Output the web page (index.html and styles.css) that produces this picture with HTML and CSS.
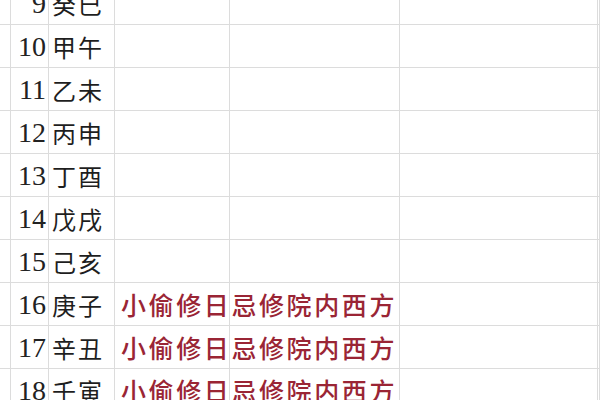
FILE: index.html
```html
<!DOCTYPE html>
<html lang="zh">
<head>
<meta charset="utf-8">
<link rel="stylesheet" href="styles.css">
</head>
<body>
<div class="sheet">
  <div class="row"><div class="c c0"></div><div class="c num">9</div><div class="c gz">癸巳</div><div class="c note"></div><div class="c e4"></div><div class="c e5"></div><div class="c e6"></div></div>
  <div class="row"><div class="c c0"></div><div class="c num">10</div><div class="c gz">甲午</div><div class="c note"></div><div class="c e4"></div><div class="c e5"></div><div class="c e6"></div></div>
  <div class="row"><div class="c c0"></div><div class="c num">11</div><div class="c gz">乙未</div><div class="c note"></div><div class="c e4"></div><div class="c e5"></div><div class="c e6"></div></div>
  <div class="row"><div class="c c0"></div><div class="c num">12</div><div class="c gz">丙申</div><div class="c note"></div><div class="c e4"></div><div class="c e5"></div><div class="c e6"></div></div>
  <div class="row"><div class="c c0"></div><div class="c num">13</div><div class="c gz">丁酉</div><div class="c note"></div><div class="c e4"></div><div class="c e5"></div><div class="c e6"></div></div>
  <div class="row"><div class="c c0"></div><div class="c num">14</div><div class="c gz">戊戌</div><div class="c note"></div><div class="c e4"></div><div class="c e5"></div><div class="c e6"></div></div>
  <div class="row"><div class="c c0"></div><div class="c num">15</div><div class="c gz">己亥</div><div class="c note"></div><div class="c e4"></div><div class="c e5"></div><div class="c e6"></div></div>
  <div class="row"><div class="c c0"></div><div class="c num">16</div><div class="c gz">庚子</div><div class="c note"><span class="red">小偷修日忌修院内西方</span></div><div class="c e4"></div><div class="c e5"></div><div class="c e6"></div></div>
  <div class="row"><div class="c c0"></div><div class="c num">17</div><div class="c gz">辛丑</div><div class="c note"><span class="red">小偷修日忌修院内西方</span></div><div class="c e4"></div><div class="c e5"></div><div class="c e6"></div></div>
  <div class="row"><div class="c c0"></div><div class="c num">18</div><div class="c gz">壬寅</div><div class="c note"><span class="red">小偷修日忌修院内西方</span></div><div class="c e4"></div><div class="c e5"></div><div class="c e6"></div></div>
</div>
</body>
</html>
```
FILE: styles.css
```css
html, body {
  margin: 0;
  padding: 0;
  background: #ffffff;
}
.sheet {
  width: 600px;
  height: 400px;
  overflow: hidden;
}
.row {
  display: grid;
  grid-template-columns: 11px 38px 66px 115px 170px 198px 1fr;
  height: 43px;
}
.row:first-child {
  margin-top: -18px;
}
.c {
  box-sizing: border-box;
  height: 43px;
  border-right: 1px solid #dcdcdc;
  border-bottom: 1px solid #dcdcdc;
  display: flex;
  align-items: center;
  white-space: nowrap;
  overflow: visible;
  position: relative;
}
.num {
  justify-content: flex-end;
  padding-right: 2px;
  padding-top: 2px;
  font-family: "Liberation Serif", serif;
  font-size: 28px;
  color: #222222;
}
.gz {
  padding-left: 3px;
  font-family: "Noto Sans CJK SC", sans-serif;
  font-size: 24px;
  letter-spacing: 2px;
  color: #1e1e1e;
}
.note {
  padding-left: 6px;
  z-index: 1;
}
.red {
  font-family: "Noto Sans CJK SC", sans-serif;
  font-size: 25px;
  font-weight: 500;
  letter-spacing: 2.6px;
  color: #9a2535;
}
```
